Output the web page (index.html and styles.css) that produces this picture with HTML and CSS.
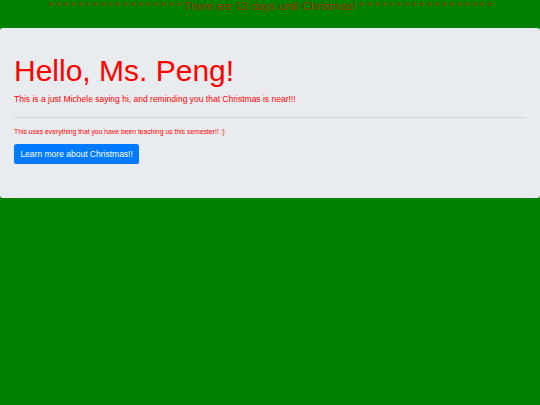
FILE: index.html
```html
<!DOCTYPE html>
<html lang="en">
<head>
<meta charset="utf-8">
<title>Christmas</title>
<link rel="stylesheet" href="styles.css">
</head>
<body>
<header class="countdown">* * * * * * * * * * * * * * * * * * There are 13 days until Christmas! * * * * * * * * * * * * * * * * * *</header>
<section class="jumbotron">
  <h1 class="title">Hello, Ms. Peng!</h1>
  <p class="intro">This is a just Michele saying hi, and reminding you that Christmas is near!!!</p>
  <hr class="divider">
  <p class="note">This uses everything that you have been teaching us this semester!! :)</p>
  <p class="actions"><a class="btn" href="#">Learn more about Christmas!!</a></p>
</section>
</body>
</html>
```
FILE: styles.css
```css
html, body {
  margin: 0;
  padding: 0;
}
body {
  background: #008000;
  font-family: "Liberation Sans", Arial, sans-serif;
  width: 540px;
  height: 405px;
  overflow: hidden;
}
.countdown {
  height: 28px;
  line-height: 13px;
  font-size: 11.3px;
  color: #9a3000;
  text-align: center;
  white-space: nowrap;
}
.jumbotron {
  background: #e9ecef;
  border-radius: 3px;
  padding: 25px 14px;
}
.title {
  margin: 0 0 4px;
  font-size: 30px;
  line-height: 36px;
  font-weight: 400;
  color: #ff0000;
}
.intro {
  margin: 0;
  font-size: 8.5px;
  line-height: 12.75px;
  color: #ff0000;
}
.divider {
  margin: 11px 0 0;
  border: 0;
  border-top: 1px solid rgba(0, 0, 0, 0.1);
  height: 0;
}
.note {
  margin: 9px 0 0;
  font-size: 6.8px;
  line-height: 10px;
  color: #ff0000;
}
.actions {
  display: flex;
  margin: 7px 0 0;
  padding-bottom: 9px;
}
.btn {
  display: block;
  height: 20px;
  line-height: 20px;
  padding: 0 6.4px;
  font-size: 8.5px;
  color: #ffffff;
  background: #007bff;
  border-radius: 2.5px;
  text-decoration: none;
}
```
